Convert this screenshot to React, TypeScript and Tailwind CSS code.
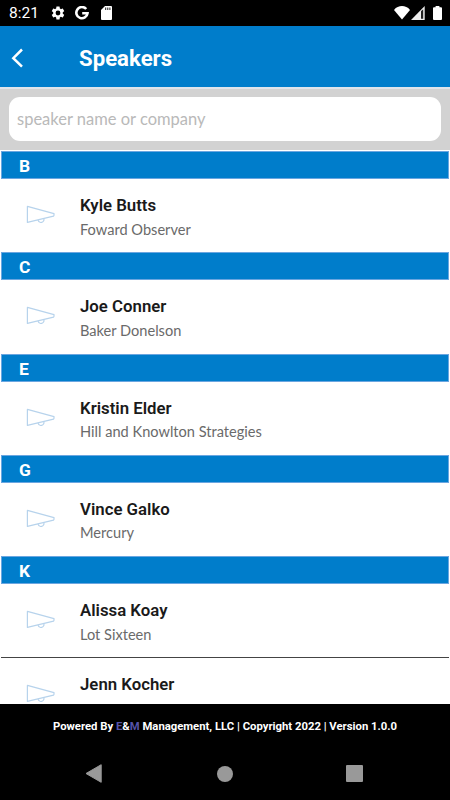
import React, { useState } from 'react';

interface Speaker {
  name: string;
  company: string;
}

interface SpeakerGroup {
  letter: string;
  speakers: Speaker[];
}

const groups: SpeakerGroup[] = [
  { letter: 'B', speakers: [{ name: 'Kyle Butts', company: 'Foward Observer' }] },
  { letter: 'C', speakers: [{ name: 'Joe Conner', company: 'Baker Donelson' }] },
  { letter: 'E', speakers: [{ name: 'Kristin Elder', company: 'Hill and Knowlton Strategies' }] },
  { letter: 'G', speakers: [{ name: 'Vince Galko', company: 'Mercury' }] },
  {
    letter: 'K',
    speakers: [
      { name: 'Alissa Koay', company: 'Lot Sixteen' },
      { name: 'Jenn Kocher', company: '' },
    ],
  },
];

const StatusBar: React.FC = () => (
  <div className="h-[26px] shrink-0 bg-black text-white flex items-center justify-between pl-[9px] pr-[8px]">
    <div className="flex items-center">
      <span className="w-[42px] text-[15.5px] leading-none pt-[2px]">8:21</span>
      {/* Settings */}
      <svg width="16" height="16" viewBox="0 0 24 24" fill="currentColor" className="-ml-px">
        <path d="M19.14 12.94c.04-.3.06-.61.06-.94 0-.32-.02-.64-.07-.94l2.03-1.58a.49.49 0 0 0 .12-.61l-1.92-3.32a.49.49 0 0 0-.59-.22l-2.39.96c-.5-.38-1.03-.7-1.62-.94l-.36-2.54a.48.48 0 0 0-.48-.41h-3.84c-.24 0-.43.17-.47.41l-.36 2.54c-.59.24-1.13.57-1.62.94l-2.39-.96a.48.48 0 0 0-.59.22L2.74 8.87a.48.48 0 0 0 .12.61l2.03 1.58c-.05.3-.09.63-.09.94s.02.64.07.94l-2.03 1.58a.49.49 0 0 0-.12.61l1.92 3.32c.12.22.37.29.59.22l2.39-.96c.5.38 1.03.7 1.62.94l.36 2.54c.05.24.24.41.48.41h3.84c.24 0 .44-.17.47-.41l.36-2.54c.59-.24 1.13-.56 1.62-.94l2.39.96c.22.08.47 0 .59-.22l1.92-3.32a.48.48 0 0 0-.12-.61l-2.01-1.58zM12 15.6a3.6 3.6 0 1 1 0-7.2 3.6 3.6 0 0 1 0 7.2z" />
      </svg>
      {/* Google */}
      <svg width="14" height="14" viewBox="0 0 14 14" fill="none" stroke="currentColor" strokeWidth="2.6" className="ml-[9px]">
        <path d="M11.2 3A5.6 5.6 0 1 0 12.5 7.3H7.2" />
      </svg>
      {/* SD card */}
      <svg width="11" height="14" viewBox="0 0 11 14" className="ml-[12px]">
        <path d="M4 0h6a1 1 0 0 1 1 1v12a1 1 0 0 1-1 1H1a1 1 0 0 1-1-1V4z" fill="currentColor" />
        <path d="M4.7 1.5v2.5M6.8 1.5v2.5M8.9 1.5v2.5" stroke="#000" strokeWidth="0.9" />
      </svg>
    </div>
    <div className="flex items-center">
      <svg width="16" height="14" viewBox="0 0 16 14" fill="currentColor">
        <path d="M8 13.5 0 4C2.2 1.2 5 .1 8 .1s5.800 1.100 8 3.900z" />
      </svg>
      <svg width="14" height="14" viewBox="0 0 14 14" className="ml-[1px] mr-[8px]">
        <path d="M13.7 0v14H0z" fill="#eee" />
        <path d="M10 5.2 12.2 3.2v9.600H10z" fill="#222" />
      </svg>
      <svg width="9" height="14" viewBox="0 0 9 14" fill="currentColor">
        <path d="M2.6 0h3.800v1.300H8a1 1 0 0 1 1 1V13a1 1 0 0 1-1 1H1a1 1 0 0 1-1-1V2.300a1 1 0 0 1 1-1h1.600z" />
      </svg>
    </div>
  </div>
);

const Megaphone: React.FC = () => (
  <svg width="30" height="20" viewBox="0 0 30 20" fill="none" stroke="#b7d3ec" strokeWidth="1.2" strokeLinejoin="round">
    <path d="M2.4 1.4v16L28.500 11.200l.5-1V8.600z" />
    <path d="M13 15.200a3 2.900 0 0 0 5.900-1.400" />
  </svg>
);

const SpeakerRow: React.FC<{ speaker: Speaker }> = ({ speaker }) => (
  <div className="h-[73.2px] flex pl-[24px]">
    <div className="w-[55px] pt-[26px] shrink-0">
      <Megaphone />
    </div>
    <div className="pt-[15px]">
      <div className="text-[16.8px] leading-[22px] font-semibold text-[#1a1a1a]">{speaker.name}</div>
      <div className="mt-[3.6px] text-[14.6px] leading-[20px] text-[#6a6a6a] font-['Lato',sans-serif]">{speaker.company}</div>
    </div>
  </div>
);

const App: React.FC = () => {
  const [query, setQuery] = useState('');

  return (
    <div className="w-[450px] h-[800px] flex flex-col overflow-hidden bg-white font-['Roboto',sans-serif]">
      <StatusBar />

      <header className="h-[61px] shrink-0 bg-[#007dcb] text-white flex items-center">
        <svg width="12" height="20" viewBox="0 0 12 20" fill="none" stroke="currentColor" strokeWidth="2.5" className="ml-[11px] mt-[3px]">
          <path d="M11 1.5 2.3 10.2l8.700 8.500" />
        </svg>
        <h1 className="ml-[56px] mt-[3px] text-[22.2px] leading-none font-bold">Speakers</h1>
      </header>

      <div className="h-[63px] shrink-0 bg-[#d2d2d2] border-t-2 border-t-[#dfe5ec] px-[9px] pt-[8px]">
        <input
          value={query}
          onChange={(e) => setQuery(e.target.value)}
          placeholder="speaker name or company"
          className="block w-full h-[44px] rounded-[11px] bg-white px-[8px] pb-[1px] text-[16.5px] outline-none text-[#333] placeholder:text-[#b9b9b9] font-['Lato',sans-serif]"
        />
      </div>

      <main className="flex-1 min-h-0 overflow-hidden px-px pt-[1.2px]">
        {groups.map((group) => (
          <section key={group.letter}>
            <div className="h-[28px] bg-[#007dcb] border border-[#6ba6e0] pl-[17px] flex items-center text-white text-[17.4px] font-bold pt-[2px]">
              {group.letter}
            </div>
            <div>
              {group.speakers.map((speaker, i) => (
                <React.Fragment key={speaker.name}>
                  {i > 0 && <div className="h-px bg-[#444]" />}
                  <SpeakerRow speaker={speaker} />
                </React.Fragment>
              ))}
            </div>
          </section>
        ))}
      </main>

      <footer className="h-[96px] shrink-0 bg-black">
        <p className="pt-[16px] text-center text-[11.3px] leading-[14px] font-bold text-white">
          Powered By <span className="text-[#5653a8]">E</span>&amp;<span className="text-[#5653a8]">M</span> Management, LLC | Copyright 2022 | Version 1.0.0
        </p>
        <nav className="mt-[30px] flex items-center pl-[85px]">
          <svg width="18" height="19" viewBox="0 0 18 19" fill="#999">
            <path d="M16.2.7v17.600L1 9.500z" stroke="#999" strokeLinejoin="round" />
          </svg>
          <div className="ml-[114px] w-[16px] h-[16px] rounded-full bg-[#999]" />
          <div className="ml-[113px] w-[17px] h-[17px] rounded-[1px] bg-[#999]" />
        </nav>
      </footer>
    </div>
  );
};

export default App;
